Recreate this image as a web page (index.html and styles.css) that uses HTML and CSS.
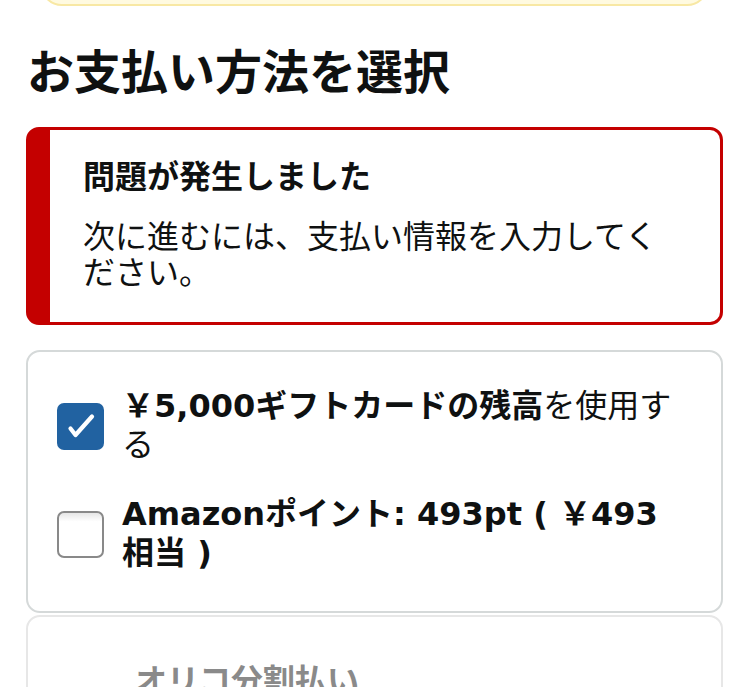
FILE: index.html
```html
<html>
<head>
    <meta charset="utf-8">
    <title>お支払い方法を選択</title>
    <link rel="stylesheet" href="styles.css">
</head>
<body>
    <div class="page">
        <div class="notice"></div>

        <h1 class="page-title">お支払い方法を選択</h1>

        <section class="alert">
            <div class="alert-body">
                <div class="alert-title">問題が発生しました</div>
                <div class="alert-text">次に進むには、支払い情報を入力してください。</div>
            </div>
        </section>

        <section class="card">
            <label class="option">
                <span class="checkbox checked">
                    <svg viewBox="0 0 47 47" width="47" height="47">
                        <path d="M13.5 25.5l5 6.5L35 13.5" fill="none" stroke="#fff" stroke-width="4.2" stroke-linecap="round" stroke-linejoin="round"/>
                    </svg>
                </span>
                <span class="option-text"><b>￥5,000ギフトカードの残高</b>を使用する</span>
            </label>
            <label class="option">
                <span class="checkbox"></span>
                <span class="option-text"><b>Amazonポイント: 493pt ( ￥493 相当 )</b></span>
            </label>
        </section>

        <section class="card card-disabled">
            <div class="card-disabled-title">オリコ分割払い</div>
        </section>
    </div>
</body>
</html>
```

FILE: styles.css
```css
html, body {
    margin: 0;
    padding: 0;
    background: #fff;
    color: #0f1111;
    font-family: "Noto Sans CJK JP", "Noto Sans", sans-serif;
}

.page {
    padding: 0 27px 0 26px;
}

.notice {
    height: 40px;
    margin: -38px 14px 0 14px;
    background: #fffae0;
    border: 2px solid #f8e8a4;
    border-radius: 22px;
}

.page-title {
    font-size: 47px;
    font-weight: bold;
    line-height: 58px;
    margin: 34px 0 29px 1px;
}

.alert {
    display: flex;
    border: 3px solid #c40000;
    border-left-width: 24px;
    border-radius: 13px;
}

.alert-body {
    padding: 24px 40px 34px 33px;
}

.alert-title {
    font-size: 32px;
    font-weight: bold;
    line-height: 40px;
}

.alert-text {
    font-size: 32px;
    line-height: 36px;
    margin-top: 22px;
}

.card {
    margin-top: 25px;
    border: 2px solid #d5d9d9;
    border-radius: 14px;
    padding: 35px 36px 38px 29px;
    display: flex;
    flex-direction: column;
    gap: 30px;
}

.option {
    display: flex;
    align-items: center;
    gap: 18px;
}

.option-text {
    font-family: "DejaVu Sans", "Noto Sans CJK JP", sans-serif;
    font-size: 32px;
    line-height: 39px;
}

.option-text b {
    font-weight: bold;
}

.checkbox {
    flex: none;
    width: 43px;
    height: 43px;
    border: 2px solid #898989;
    border-radius: 7px;
    background: linear-gradient(#e6e6e6, #fff 20%);
    display: flex;
    align-items: center;
    justify-content: center;
}

.checkbox.checked {
    width: 47px;
    height: 47px;
    border: none;
    background: #2162a1;
}

.card-disabled {
    margin-top: 2px;
    border-color: #e7e7e7;
    padding: 41px 0 0 107px;
    height: 80px;
}

.card-disabled-title {
    color: #8a8a8a;
    font-size: 32px;
    font-weight: bold;
    line-height: 40px;
}
```
